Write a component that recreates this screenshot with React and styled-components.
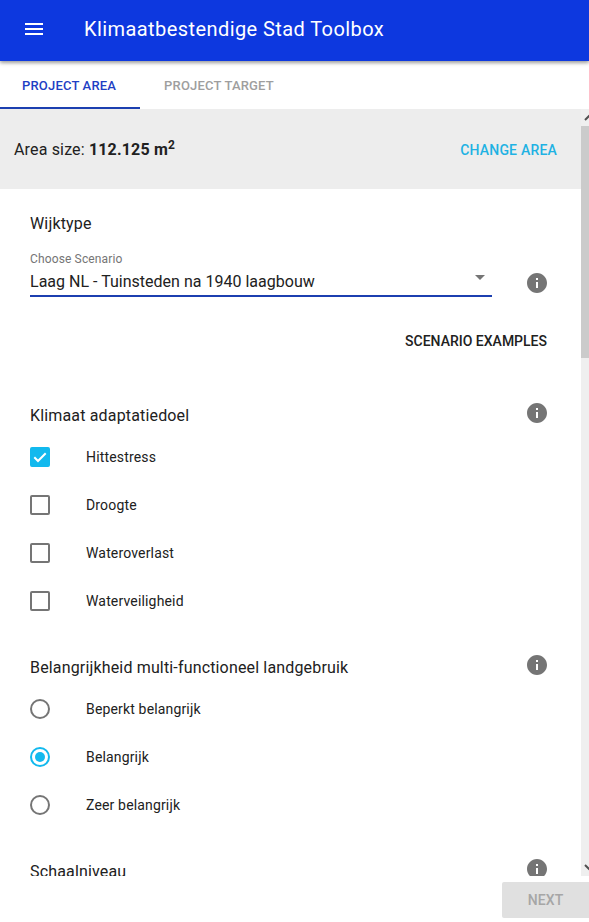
import React, { useState } from "react";
import styled, { createGlobalStyle } from "styled-components";

const Global = createGlobalStyle`
  * { box-sizing: border-box; }
  body {
    margin: 0;
    background: #fff;
    color: #212121;
    font-family: Roboto, "Liberation Sans", sans-serif;
    overflow: hidden;
  }
  button { font-family: inherit; border: 0; padding: 0; background: none; cursor: pointer; }
`;

const Page = styled.div`
  display: flex;
  flex-direction: column;
  width: 589px;
  height: 922px;
  overflow: hidden;
`;

const AppBar = styled.header`
  position: relative;
  z-index: 1;
  flex: none;
  display: flex;
  align-items: center;
  height: 61px;
  padding: 0 22px 3px;
  background: #0d38df;
  color: #fff;
  box-shadow: 0 1px 5px rgba(0, 0, 0, 0.3), 0 2px 3px rgba(0, 0, 0, 0.2);
`;

const MenuButton = styled.button`
  width: 24px;
  height: 24px;
  margin-right: 38px;
  color: #fff;
`;

const Title = styled.h1`
  margin: 0;
  font-size: 20px;
  font-weight: 400;
  line-height: 26px;
  letter-spacing: 0.42px;
`;

const Svg = styled.svg`
  display: block;
  width: 24px;
  height: 24px;
  fill: currentColor;
`;

const Tabs = styled.nav`
  flex: none;
  display: flex;
  height: 48px;
`;

const Tab = styled.button`
  height: 48px;
  padding: 2px 24px 0 ${(p) => (p.$active ? "22px" : "24px")};
  border-bottom: 2px solid ${(p) => (p.$active ? "#1c3fb0" : "transparent")};
  color: ${(p) => (p.$active ? "#1f3fc4" : "#9e9e9e")};
  font-size: 13px;
  font-weight: 500;
  letter-spacing: 0.18px;
`;

const Body = styled.div`
  flex: none;
  display: flex;
  height: 767px;
`;

const Content = styled.main`
  width: 581px;
  overflow: hidden;
`;

const AreaBar = styled.section`
  display: flex;
  justify-content: space-between;
  align-items: center;
  height: 80px;
  padding: 2px 24px 0 14px;
  background: #ededed;
`;

const AreaText = styled.div`
  font-size: 16px;
  line-height: 24px;
  letter-spacing: 0.16px;
  sup { font-size: 12px; line-height: 0; }
`;

const TextButton = styled.button`
  color: ${(p) => p.$color};
  font-size: 14px;
  font-weight: 500;
  line-height: 20px;
  letter-spacing: ${(p) => p.$spacing || "0"};
`;

const Section = styled.section`
  height: ${(p) => p.$height}px;
  padding: ${(p) => p.$top}px 32px 0 30px;
`;

const SectionHead = styled.div`
  display: flex;
  justify-content: space-between;
  height: 32px;
`;

const Heading = styled.h2`
  margin: 0;
  padding-top: 3px;
  font-size: 16px;
  font-weight: 400;
  line-height: 24px;
  letter-spacing: 0.16px;
`;

const InfoIcon = styled(Svg)`
  color: #757575;
`;

const SelectRow = styled.div`
  display: flex;
  justify-content: space-between;
  align-items: flex-end;
  margin-top: 9px;
  height: 47px;
`;

const Select = styled.div`
  width: 462px;
  height: 47px;
  border-bottom: 2px solid #1c3fb0;
`;

const Label = styled.div`
  padding-top: 1px;
  color: #757575;
  font-size: 12px;
  line-height: 16px;
  letter-spacing: 0.14px;
`;

const Value = styled.div`
  display: flex;
  justify-content: space-between;
  font-size: 16px;
  line-height: 30px;
  height: 28px;
  letter-spacing: 0.01px;
`;

const Caret = styled.span`
  margin: 8px 7px 0 0;
  width: 10px;
  height: 5px;
  background: #757575;
  clip-path: polygon(0 0, 100% 0, 50% 100%);
`;

const InfoSlot = styled.span`
  margin-bottom: 2px;
`;

const Actions = styled.div`
  display: flex;
  justify-content: flex-end;
  padding: 34px 2px 0 0;
`;

const Option = styled.div`
  display: flex;
  align-items: center;
  height: 48px;
  font-size: 14px;
  letter-spacing: 0.16px;
  cursor: pointer;
`;

const Box = styled.span`
  display: grid;
  place-items: center;
  width: 20px;
  height: 20px;
  margin-right: 36px;
  border: 2px solid ${(p) => (p.$on ? "#12b9ee" : "#757575")};
  border-radius: ${(p) => (p.$round ? "50%" : "2px")};
  background: ${(p) => (p.$on && !p.$round ? "#12b9ee" : "transparent")};
`;

const Dot = styled.span`
  width: 10px;
  height: 10px;
  border-radius: 50%;
  background: #12b9ee;
`;

const Check = styled.svg`
  display: block;
  width: 16px;
  height: 16px;
  fill: none;
  stroke: #fff;
  stroke-width: 2;
`;

const Scrollbar = styled.div`
  display: flex;
  flex-direction: column;
  justify-content: space-between;
  width: 8px;
  background: #efefef;
`;

const Thumb = styled.div`
  height: 232px;
  margin-bottom: auto;
  background: #cbcbcb;
`;

const Arrow = styled.svg`
  display: block;
  width: 8px;
  height: 17px;
  fill: none;
  stroke: #505050;
  stroke-width: 2;
`;

const Footer = styled.footer`
  flex: none;
  display: flex;
  justify-content: flex-end;
  height: 46px;
  padding-top: 6px;
`;

const NextButton = styled.button`
  width: 87px;
  height: 36px;
  border-radius: 2px 0 0 2px;
  background: #e0e0e0;
  color: #a6a6a6;
  font-size: 14px;
  font-weight: 500;
  letter-spacing: 0.1px;
`;

const Info = () => (
  <InfoIcon viewBox="0 0 24 24">
    <path d="M12 2C6.48 2 2 6.48 2 12s4.48 10 10 10 10-4.48 10-10S17.52 2 12 2zm1 15h-2v-6h2v6zm0-8h-2V7h2v2z" />
  </InfoIcon>
);

const goals = ["Hittestress", "Droogte", "Wateroverlast", "Waterveiligheid"];
const levels = ["Beperkt belangrijk", "Belangrijk", "Zeer belangrijk"];

export default function App() {
  const [selected, setSelected] = useState(["Hittestress"]);
  const [level, setLevel] = useState("Belangrijk");
  const toggle = (g) =>
    setSelected((s) => (s.includes(g) ? s.filter((x) => x !== g) : [...s, g]));

  return (
    <Page>
      <Global />
      <AppBar>
        <MenuButton aria-label="Menu">
          <Svg viewBox="0 0 24 24">
            <path d="M3 18h18v-2H3v2zm0-5h18v-2H3v2zm0-7v2h18V6H3z" />
          </Svg>
        </MenuButton>
        <Title>Klimaatbestendige Stad Toolbox</Title>
      </AppBar>
      <Tabs>
        <Tab $active>PROJECT AREA</Tab>
        <Tab>PROJECT TARGET</Tab>
      </Tabs>
      <Body>
        <Content>
          <AreaBar>
            <AreaText>
              Area size: <b>112.125 m<sup>2</sup></b>
            </AreaText>
            <TextButton $color="#1fb2e3" $spacing="0.2px">CHANGE AREA</TextButton>
          </AreaBar>
          <Section $height={212} $top={20}>
            <SectionHead>
              <Heading>Wijktype</Heading>
            </SectionHead>
            <SelectRow>
              <Select>
                <Label>Choose Scenario</Label>
                <Value>
                  Laag NL - Tuinsteden na 1940 laagbouw
                  <Caret />
                </Value>
              </Select>
              <InfoSlot>
                <Info />
              </InfoSlot>
            </SelectRow>
            <Actions>
              <TextButton $color="#212121">SCENARIO EXAMPLES</TextButton>
            </Actions>
          </Section>
          <Section $height={252} $top={0}>
            <SectionHead>
              <Heading>Klimaat adaptatiedoel</Heading>
              <Info />
            </SectionHead>
            {goals.map((g) => (
              <Option key={g} onClick={() => toggle(g)}>
                <Box $on={selected.includes(g)}>
                  {selected.includes(g) && (
                    <Check viewBox="0 0 16 16">
                      <path d="M2.3 8.3 6 12 13.7 4.2" />
                    </Check>
                  )}
                </Box>
                {g}
              </Option>
            ))}
          </Section>
          <Section $height={204} $top={0}>
            <SectionHead>
              <Heading>Belangrijkheid multi-functioneel landgebruik</Heading>
              <Info />
            </SectionHead>
            {levels.map((l) => (
              <Option key={l} onClick={() => setLevel(l)}>
                <Box $round $on={level === l}>
                  {level === l && <Dot />}
                </Box>
                {l}
              </Option>
            ))}
          </Section>
          <Section $height={28} $top={0}>
            <SectionHead>
              <Heading>Schaalniveau</Heading>
              <Info />
            </SectionHead>
          </Section>
        </Content>
        <Scrollbar>
          <Arrow viewBox="0 0 8 17">
            <path d="M4 11 8.5 6.5" />
          </Arrow>
          <Thumb />
          <Arrow viewBox="0 0 8 17">
            <path d="M4 6 8.5 10.5" />
          </Arrow>
        </Scrollbar>
      </Body>
      <Footer>
        <NextButton disabled>NEXT</NextButton>
      </Footer>
    </Page>
  );
}
